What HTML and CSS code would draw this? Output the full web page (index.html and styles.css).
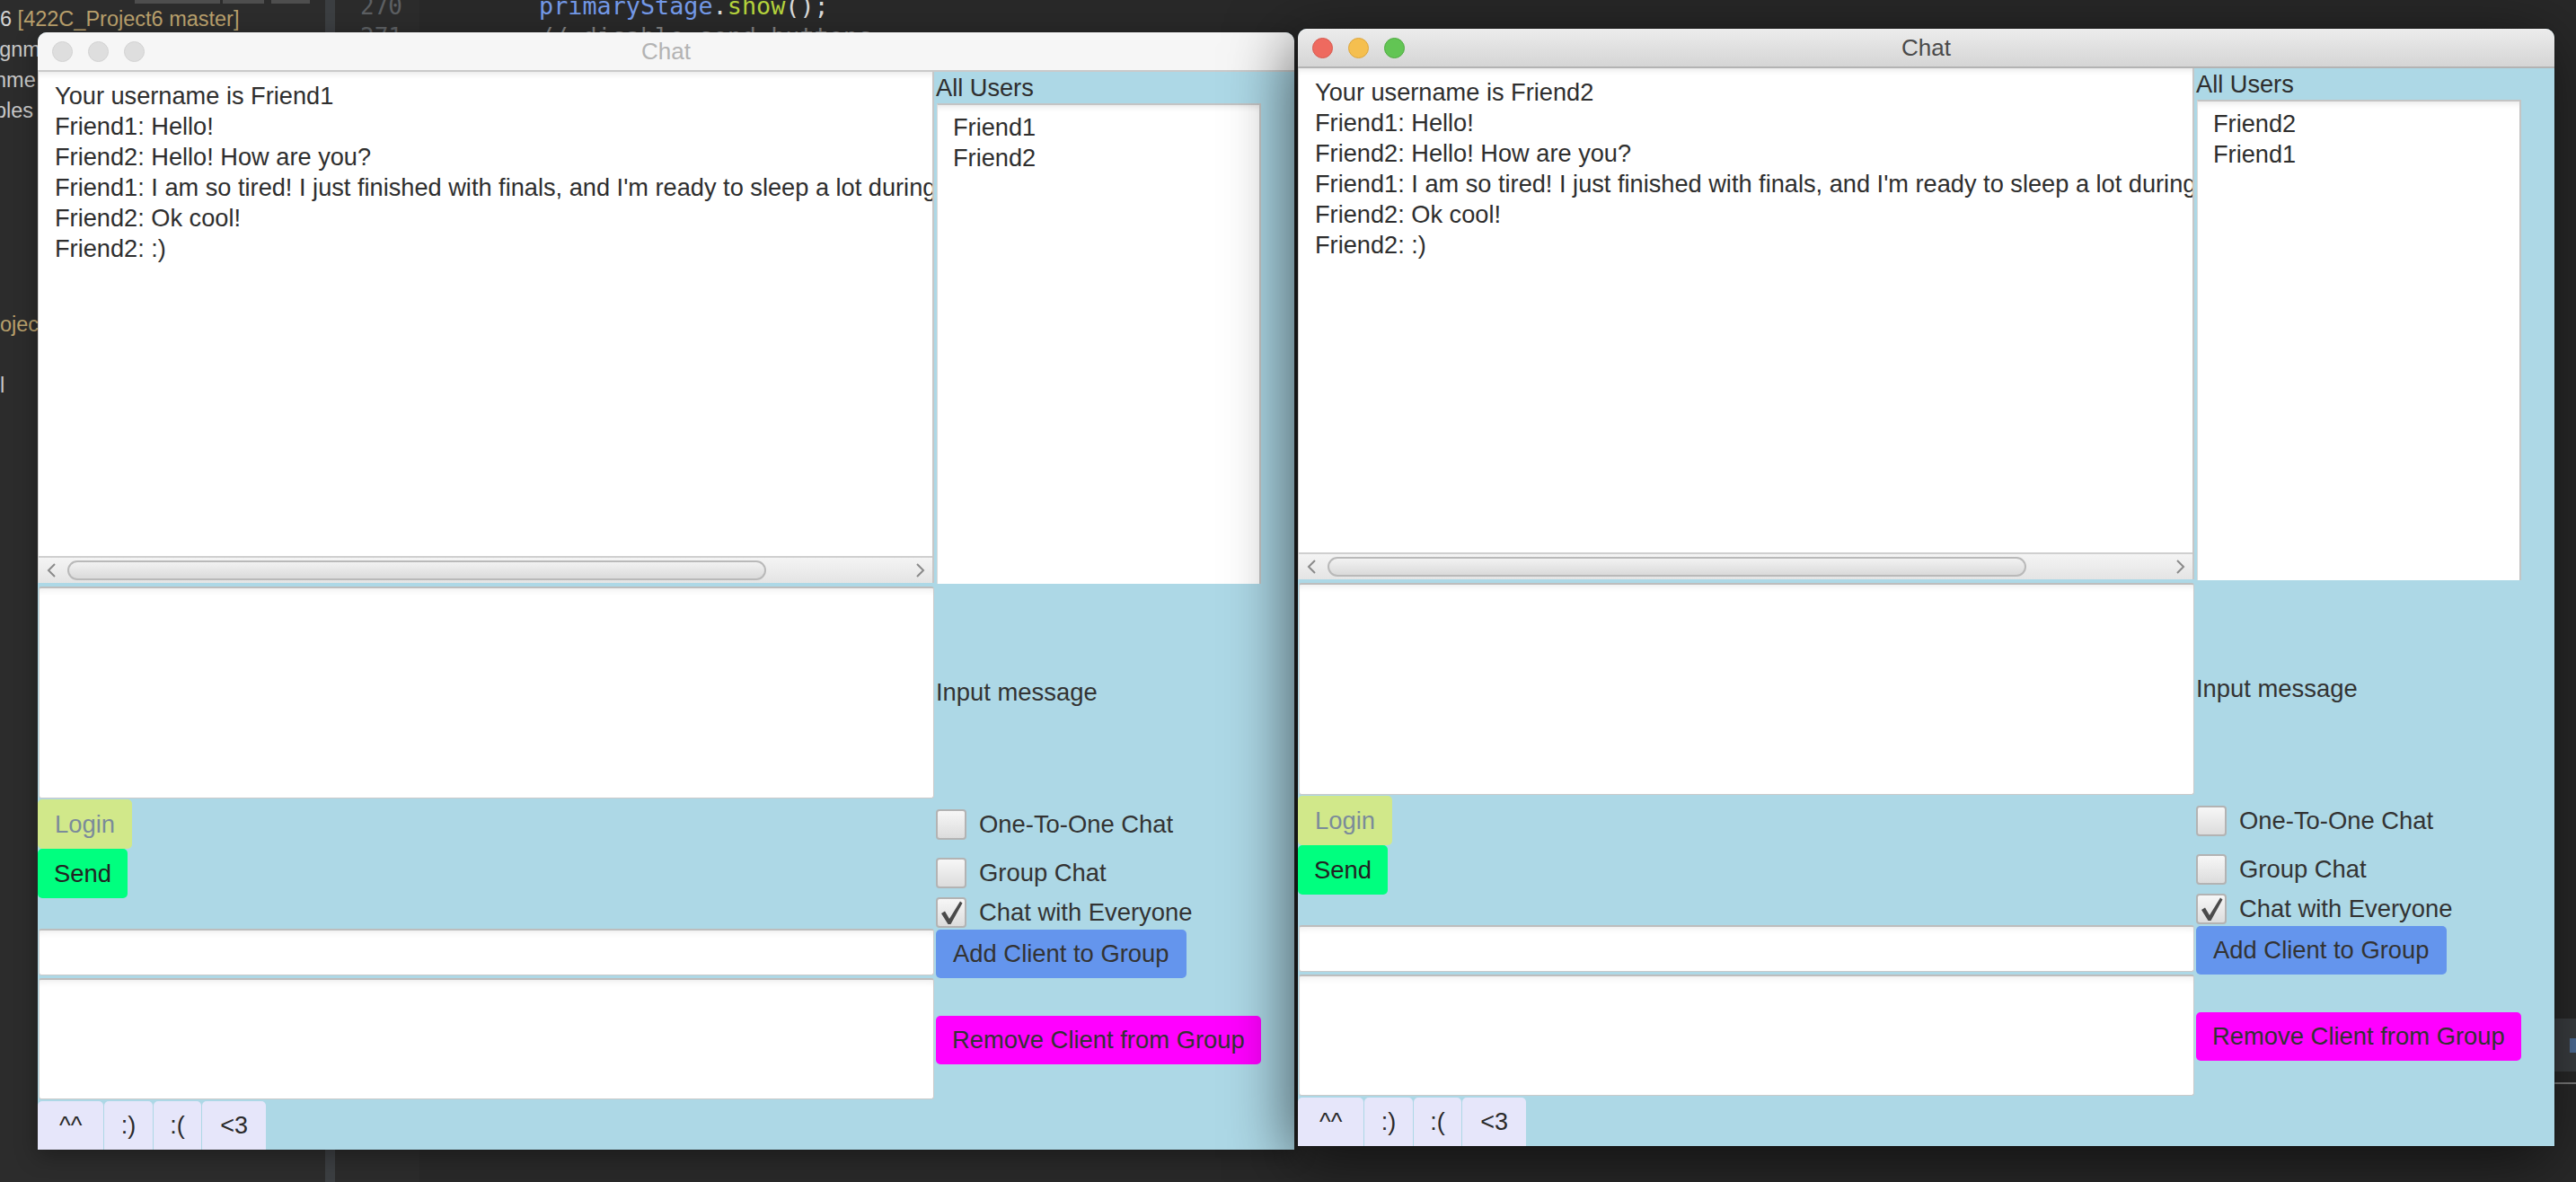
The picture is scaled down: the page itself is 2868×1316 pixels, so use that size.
FILE: index.html
```html
<!DOCTYPE html>
<html>
<head>
<meta charset="utf-8">
<title>Chat</title>
<link rel="stylesheet" href="styles.css">
</head>
<body>
<div class="desktop">
  <div class="ide">
    <div class="sidebar">
      <div class="sb-tabs"><span class="sb-tab t1"></span><span class="sb-tab t2"></span><span class="sb-tab t3"></span></div>
      <div class="tree">
        <div class="row"><span class="num">6</span> <span class="vcs">[422C_Project6 master]</span></div>
        <div class="row cut">ignme</div>
        <div class="row cut">nme</div>
        <div class="row cut">ples</div>
        <div class="row"></div>
        <div class="row"></div>
        <div class="row"></div>
        <div class="row"></div>
        <div class="row"></div>
        <div class="row"></div>
        <div class="row vcs">ojec</div>
        <div class="row"></div>
        <div class="row">l</div>
      </div>
    </div>
    <div class="divider"></div>
    <div class="gutter">
      <div class="ln">270</div>
      <div class="ln">271</div>
    </div>
    <div class="code">
      <div class="code-lines">
        <div class="cl"><span class="c-id">primaryStage</span><span class="c-p">.</span><span class="c-fn">show</span><span class="c-p">();</span></div>
        <div class="cl c-cm">// disable send buttons</div>
      </div>
      <div class="tool-strip"><span class="tool-icon"></span></div>
      <div class="tool-line"></div>
    </div>
  </div>

  <div class="window w1">
    <div class="titlebar">
      <div class="lights"><span class="light"></span><span class="light"></span><span class="light"></span></div>
      <div class="title">Chat</div>
    </div>
    <div class="content">
      <div class="chat-pane">
        <div class="chat-text">
          <div>Your username is Friend1</div>
          <div>Friend1: Hello!</div>
          <div>Friend2: Hello! How are you?</div>
          <div>Friend1: I am so tired! I just finished with finals, and I'm ready to sleep a lot during break!</div>
          <div>Friend2: Ok cool!</div>
          <div>Friend2: :)</div>
        </div>
        <div class="hscroll">
          <svg class="arrow" width="14" height="18" viewBox="0 0 14 18"><polyline points="11,2 4,9 11,16" fill="none" stroke="#8a8a8a" stroke-width="2"/></svg>
          <div class="thumb"></div>
          <svg class="arrow arrow-r" width="14" height="18" viewBox="0 0 14 18"><polyline points="3,2 10,9 3,16" fill="none" stroke="#8a8a8a" stroke-width="2"/></svg>
        </div>
      </div>
      <div class="users">
        <div class="users-label">All Users</div>
        <div class="list">
          <div>Friend1</div>
          <div>Friend2</div>
        </div>
      </div>
      <div class="input-area"></div>
      <div class="input-label">Input message</div>
      <div class="btn-col">
        <button class="btn login">Login</button>
        <button class="btn send">Send</button>
      </div>
      <div class="checks">
        <div class="check c1"><span class="box"></span><span>One-To-One Chat</span></div>
        <div class="check c2"><span class="box"></span><span>Group Chat</span></div>
        <div class="check c3"><span class="box"><svg width="30" height="30" viewBox="0 0 30 30"><path d="M4,16 L8,13.5 L13,22 L25,2.5 L27.5,4.5 L14.5,28 L11.5,28 Z" fill="#4a4a4a"/></svg></span><span>Chat with Everyone</span></div>
      </div>
      <div class="fields">
        <div class="textfield"></div>
        <div class="textarea"></div>
      </div>
      <div class="group-btns">
        <button class="btn add">Add Client to Group</button>
        <button class="btn remove">Remove Client from Group</button>
      </div>
      <div class="emojis">
        <button class="emo wide">^^</button>
        <button class="emo">:)</button>
        <button class="emo">:(</button>
        <button class="emo heart">&lt;3</button>
      </div>
    </div>
  </div>

  <div class="window w2">
    <div class="titlebar">
      <div class="lights"><span class="light red"></span><span class="light yellow"></span><span class="light green"></span></div>
      <div class="title">Chat</div>
    </div>
    <div class="content">
      <div class="chat-pane">
        <div class="chat-text">
          <div>Your username is Friend2</div>
          <div>Friend1: Hello!</div>
          <div>Friend2: Hello! How are you?</div>
          <div>Friend1: I am so tired! I just finished with finals, and I'm ready to sleep a lot during break!</div>
          <div>Friend2: Ok cool!</div>
          <div>Friend2: :)</div>
        </div>
        <div class="hscroll">
          <svg class="arrow" width="14" height="18" viewBox="0 0 14 18"><polyline points="11,2 4,9 11,16" fill="none" stroke="#8a8a8a" stroke-width="2"/></svg>
          <div class="thumb"></div>
          <svg class="arrow arrow-r" width="14" height="18" viewBox="0 0 14 18"><polyline points="3,2 10,9 3,16" fill="none" stroke="#8a8a8a" stroke-width="2"/></svg>
        </div>
      </div>
      <div class="users">
        <div class="users-label">All Users</div>
        <div class="list">
          <div>Friend2</div>
          <div>Friend1</div>
        </div>
      </div>
      <div class="input-area"></div>
      <div class="input-label">Input message</div>
      <div class="btn-col">
        <button class="btn login">Login</button>
        <button class="btn send">Send</button>
      </div>
      <div class="checks">
        <div class="check c1"><span class="box"></span><span>One-To-One Chat</span></div>
        <div class="check c2"><span class="box"></span><span>Group Chat</span></div>
        <div class="check c3"><span class="box"><svg width="30" height="30" viewBox="0 0 30 30"><path d="M4,16 L8,13.5 L13,22 L25,2.5 L27.5,4.5 L14.5,28 L11.5,28 Z" fill="#4a4a4a"/></svg></span><span>Chat with Everyone</span></div>
      </div>
      <div class="fields">
        <div class="textfield"></div>
        <div class="textarea"></div>
      </div>
      <div class="group-btns">
        <button class="btn add">Add Client to Group</button>
        <button class="btn remove">Remove Client from Group</button>
      </div>
      <div class="emojis">
        <button class="emo wide">^^</button>
        <button class="emo">:)</button>
        <button class="emo">:(</button>
        <button class="emo heart">&lt;3</button>
      </div>
    </div>
  </div>
</div>
</body>
</html>
```
FILE: styles.css
```css
* { box-sizing: border-box; }
html, body { margin: 0; padding: 0; }
body {
  width: 2868px;
  height: 1316px;
  overflow: hidden;
  background: #282828;
  font-family: "Liberation Sans", Arial, sans-serif;
}
.desktop { position: relative; width: 2868px; height: 1316px; }

/* ---------- IDE background ---------- */
.ide { display: flex; height: 1316px; }
.sidebar {
  width: 362px;
  flex: none;
  background: #2c2c2c;
  overflow: hidden;
  font-size: 23.5px;
  color: #c8c8c8;
}
.sb-tabs { display: flex; height: 4px; padding-left: 150px; gap: 3px; }
.sb-tab { height: 4px; background: #4e4e4e; }
.sb-tab.t1 { width: 95px; }
.sb-tab.t2 { width: 46px; }
.sb-tab.t3 { width: 43px; margin-left: 5px; }
.tree { white-space: nowrap; }
.row { height: 34px; line-height: 34px; }
.row.cut { text-indent: -6px; }
.num { color: #d2d2d2; }
.vcs { color: #b9a06c; }
.divider { width: 11px; flex: none; background: #3b3e41; }
.gutter {
  width: 94px;
  flex: none;
  background: #2b2b2b;
  padding-right: 19px;
  text-align: right;
  font-family: "DejaVu Sans Mono", monospace;
  font-size: 26px;
  color: #5c5f62;
}
.ln { height: 34px; line-height: 34px; }
.gutter .ln:first-child { margin-top: -10px; }
.code {
  flex: 1;
  background: #282828;
  display: flex;
  flex-direction: column;
  font-family: "DejaVu Sans Mono", monospace;
  font-size: 26.8px;
}
.code-lines { padding-left: 133px; margin-top: -10px; }
.cl { height: 34px; line-height: 34px; white-space: nowrap; }
.c-id { color: #7398e6; }
.c-p { color: #d8d8d8; }
.c-fn { color: #b4d23c; }
.c-cm { color: #7d7d7d; }
.tool-strip {
  align-self: flex-end;
  margin-top: 1076px;
  width: 26px;
  height: 59px;
  background: #3a3d40;
  display: flex;
  align-items: center;
  justify-content: flex-end;
}
.tool-icon { width: 7px; height: 16px; background: #4e6d96; }
.tool-line { align-self: flex-end; width: 26px; height: 2px; margin-top: 12px; background: #7a7a7a; }

/* ---------- windows ---------- */
.window {
  position: absolute;
  width: 1399px;
  height: 1244px;
  border-radius: 10px 10px 0 0;
  overflow: hidden;
  background: #add8e6;
  display: flex;
  flex-direction: column;
}
.w1 { left: 42px; top: 36px; box-shadow: 0 6px 24px rgba(0,0,0,0.35); }
.w2 { left: 1445px; top: 32px; box-shadow: -8px 14px 70px rgba(0,0,0,0.6), 0 0 0 1px rgba(0,0,0,0.25); }

.titlebar {
  height: 44px;
  flex: none;
  display: grid;
  align-items: center;
  background: #f6f6f6;
  border-bottom: 2px solid #cacaca;
}
.w2 .titlebar {
  background: linear-gradient(#ececec, #d5d5d5);
  border-bottom-color: #b3b3b3;
}
.lights, .title { grid-area: 1 / 1; }
.lights { display: flex; gap: 17px; padding-left: 16px; }
.light {
  width: 23px;
  height: 23px;
  border-radius: 50%;
  background: #dedede;
  border: 1px solid #d2d2d2;
}
.light.red { background: #ee6a5f; border-color: #d65a4f; }
.light.yellow { background: #f5bf4f; border-color: #dca53c; }
.light.green { background: #62c554; border-color: #4fab41; }
.title { justify-self: center; font-size: 26px; color: #b3b3b3; }
.w2 .title { color: #4a4a4a; }

.content {
  flex: 1;
  display: grid;
  grid-template-columns: 998px 399px;
  column-gap: 2px;
  grid-template-rows: 573px 236px 145px 192px 54px;
  font-size: 27.4px;
  color: #333;
  min-height: 0;
}

/* chat pane */
.chat-pane {
  height: 569px;
  background: #fff;
  display: flex;
  flex-direction: column;
  border-right: 2px solid #c6c6c6;
  border-left: 1px solid #d0d0d0;
}
.chat-text {
  flex: 1;
  padding: 10px 0 0 18px;
  font-size: 27.2px;
  line-height: 34px;
  white-space: nowrap;
  overflow: hidden;
  color: #2e2e2e;
  box-shadow: inset 0 7px 7px -5px rgba(0,0,0,0.10);
}
.hscroll {
  height: 30px;
  flex: none;
  border-top: 2px solid #cfcfcf;
  background: linear-gradient(#f4f4f4, #e4e4e4);
  display: flex;
  align-items: center;
  padding-left: 7px;
}
.arrow { flex: none; }
.thumb {
  margin-left: 11px;
  width: 778px;
  height: 22px;
  border: 2px solid #b9b9b9;
  border-radius: 11px;
  background: linear-gradient(#f2f2f2, #dadada);
}
.arrow-r { margin-left: auto; margin-right: 6px; }

/* users list */
.users { display: flex; flex-direction: column; }
.users-label { height: 35px; line-height: 35px; font-size: 27.2px; color: #2e2e2e; }
.list {
  margin-left: 1px;
  width: 361px;
  height: 535px;
  background: #fff;
  border-top: 2px solid #c4c4c4;
  border-right: 2px solid #c4c4c4;
  border-left: 1px solid #dadada;
  padding: 8px 0 0 17px;
  line-height: 34px;
  font-size: 27.2px;
  color: #2e2e2e;
  box-shadow: inset 0 7px 7px -5px rgba(0,0,0,0.10);
}

/* input area */
.input-area, .textfield, .textarea {
  background: #fff;
  border: 1px solid #cacaca;
  border-top: 2px solid #bdbdbd;
  border-radius: 3px;
  box-shadow: inset 0 7px 7px -5px rgba(0,0,0,0.08);
}
.input-area { margin-left: 1px; }
.input-label { align-self: center; }

/* login / send */
.btn-col { display: flex; flex-direction: column; align-items: flex-start; padding-top: 1px; }
.btn {
  font-family: "Liberation Sans", Arial, sans-serif;
  font-size: 27.4px;
  border: none;
  border-radius: 5px;
  height: 55px;
  padding: 0 19px;
  color: #333;
  white-space: nowrap;
}
.login { background: #d1e88a; color: #7b8b9a; }
.send { background: #00ff7f; color: #222; padding: 0 18px; }

/* checkboxes */
.checks { display: flex; flex-direction: column; }
.check { display: flex; align-items: center; gap: 14px; height: 34px; }
.check.c1 { margin-top: 12px; }
.check.c2 { margin-top: 20px; }
.check.c3 { margin-top: 10px; }
.box {
  width: 34px;
  height: 34px;
  flex: none;
  border: 2px solid #b3b3b3;
  border-radius: 4px;
  background: linear-gradient(#f7f7f7, #dcdcdc);
  display: flex;
  align-items: center;
  justify-content: center;
}

/* fields */
.fields { display: flex; flex-direction: column; gap: 3px; }
.textfield { height: 52px; margin-left: 1px; }
.textarea { height: 135px; margin-left: 1px; }

/* group buttons */
.group-btns { display: flex; flex-direction: column; align-items: flex-start; padding-top: 1px; gap: 42px; }
.add { background: #6495ed; height: 54px; }
.remove { background: #ff00ff; height: 54px; padding: 0 18px; }

/* emojis */
.emojis { display: flex; gap: 1px; align-items: flex-start; }
.emo {
  font-family: "Liberation Sans", Arial, sans-serif;
  font-size: 27px;
  color: #2a2a2a;
  background: #e6e6fa;
  border: none;
  border-radius: 5px 5px 0 0;
  height: 54px;
  padding: 0 18.5px;
}
.emo.wide { padding: 0 24px; }
.emo.heart { padding: 0 20px; }
```
